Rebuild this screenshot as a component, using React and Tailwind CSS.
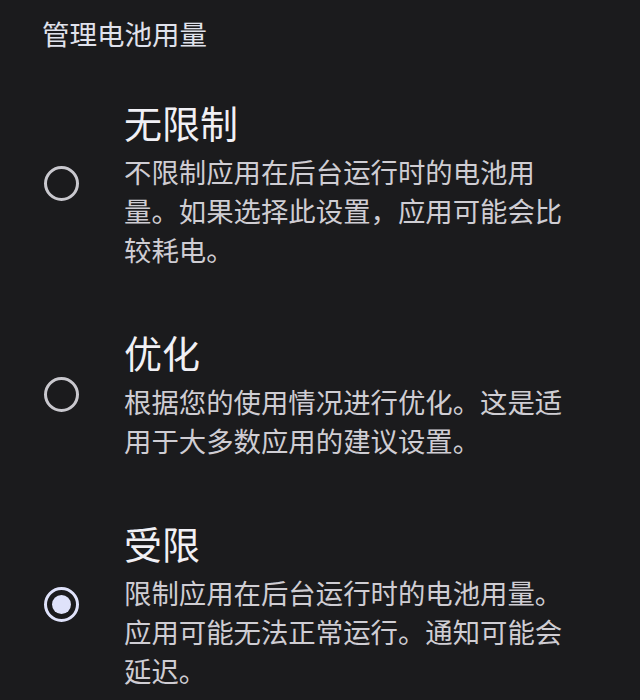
const OPTIONS = [
  {
    key: 'unrestricted',
    title: '无限制',
    desc: '不限制应用在后台运行时的电池用量。如果选择此设置，应用可能会比较耗电。',
  },
  {
    key: 'optimized',
    title: '优化',
    desc: '根据您的使用情况进行优化。这是适用于大多数应用的建议设置。',
  },
  {
    key: 'restricted',
    title: '受限',
    desc: '限制应用在后台运行时的电池用量。应用可能无法正常运行。通知可能会延迟。',
  },
];

function Radio({ checked }) {
  return (
    <div
      className={`w-[35px] h-[35px] rounded-full border-[3.5px] flex items-center justify-center ${
        checked ? 'border-[#dfe2fa]' : 'border-[#c9c8ce]'
      }`}
    >
      {checked && <div className="w-[19px] h-[19px] rounded-full bg-[#dfe2fa]" />}
    </div>
  );
}

export default function App() {
  const selected = 'restricted';

  return (
    <div
      className="w-[640px] h-[700px] overflow-hidden bg-[#1b1b1d]"
      style={{ fontFamily: '"Noto Sans CJK SC", "Noto Sans", sans-serif' }}
    >
      <div className="pt-[13px] pl-[42px] text-[27.5px] leading-[40px] text-[#e0e2ec]">
        管理电池用量
      </div>

      <div className="mt-[45px] flex flex-col gap-[59px]">
        {OPTIONS.map(opt => (
          <div key={opt.key} className="flex items-center">
            <div className="w-[124px] shrink-0 pl-[44px]">
              <Radio checked={opt.key === selected} />
            </div>
            <div className="w-[452px]">
              <div className="text-[38px] leading-[48px] text-[#f1f0f5]">{opt.title}</div>
              <p className="mt-[6px] text-[27.4px] leading-[39px] text-[#cfcdd3]">{opt.desc}</p>
            </div>
          </div>
        ))}
      </div>
    </div>
  );
}
